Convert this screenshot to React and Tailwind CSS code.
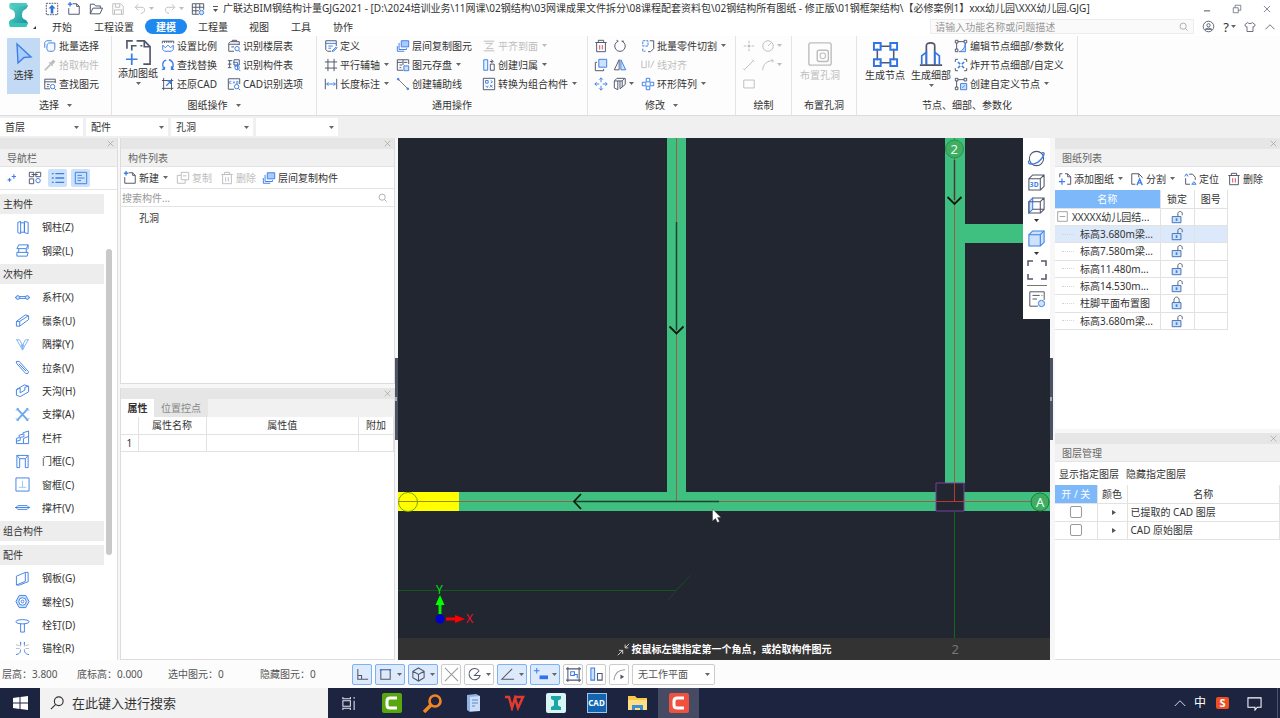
import React from "react";

const D = "#50566b";
const B = "#3d7fe6";
const L = "#cfe2fb";
const G = "#bdbdbd";

function Svg({ children, s = 14, vb = 16, stroke = D, sw = 1.1 }) {
  return (
    <svg width={s} height={s} viewBox={`0 0 ${vb} ${vb}`} fill="none" stroke={stroke} strokeWidth={sw} className="shrink-0" aria-hidden="true">
      {children}
    </svg>
  );
}

function Caret({ color = "#666" }) {
  return (
    <svg width="5" height="3" viewBox="0 0 5 3" className="shrink-0" aria-hidden="true">
      <path d="M0 0h5L2.5 3z" fill={color} />
    </svg>
  );
}

const ic = {
  batch: <><path d="M2 10V4l2-2h6" stroke={B} /><path d="M4.500 8c0-2 1-3.500 3-3.500h6v6c0 2-1 3.500-3 3.500h-3c-2 0-3-1-3-3z" stroke={B} fill="#f4f8ff" /></>,
  pick: <><path d="M2 14l6.500-6.500" stroke={G} strokeWidth="2" /><path d="M7 5l4 4" stroke={G} strokeWidth="1.500" /><path d="M9 7l4-4" stroke={G} strokeWidth="3.500" /></>,
  find: <><path d="M14 7V2.500H2v11h6" /><path d="M2 5.500h12M4.500 8.500h3M4.500 11h2" /><circle cx="11" cy="11" r="2.500" stroke={B} /><path d="M13 13l2 2" stroke={B} /></>,
  scale: <><path d="M1.500 5V2.500h13V5M4 2.500v2M6.500 2.500v2M9 2.500v2M11.500 2.500v2" /><path d="M2 7v5l2 2h8l2-2V7l-3 3-3-3-3 3z" stroke={B} /></>,
  replace: <><path d="M6 2.500C1 3.500 1 10 4 13M4 13H1M4 13v-3" stroke={B} strokeWidth="1.500" /><path d="M9 2c5 1 6.500 7 3 11M12 9.500V13h3" stroke={B} strokeWidth="1.500" /></>,
  restore: <><path d="M3 1v14M1 4h13M1 13h13M12 2v13" /><path d="M6 10l5-5M7.500 4.500H11V8" stroke={B} strokeWidth="1.600" /></>,
  floorTbl: <><path d="M14 7V3H4L2 5v9h6M2 6h12M5 9h3M6 3V1.500h5V3" /><circle cx="11.500" cy="11" r="2.500" stroke={B} /><path d="M13.500 13l1.500 2" stroke={B} /></>,
  compTbl: <><path d="M1 3h5M1 7h4M1 11h4M3 3v8M8 2h6v6H8z" /><path d="M7 5h5v8M8 9h4" stroke={B} /><circle cx="11.500" cy="11" r="2.500" stroke={B} /><path d="M13.500 13l1.500 2" stroke={B} /></>,
  cadOpt: <><path d="M14.500 8V2h-13v12H8" /><path d="M5 5H3v2.500h2M7 7.500L8 5l1 2.500M11 5v2.500h1.500V5z" stroke={B} strokeWidth=".8" /><circle cx="11" cy="11" r="2.500" stroke={B} /><path d="M13 13l2 2" stroke={B} /></>,
  define: <><path d="M14 8V2H2v10l2 2h4" /><path d="M2 5h12M5 8h5M5 10.500h3" stroke={B} /><path d="M9 14l5-5 1 1-4 4z" stroke={B} fill={L} /></>,
  axis: <path d="M4.500 1v14M11.500 1v14M1 4.500h14M1 11.500h14" />,
  length: <><path d="M1.500 2v12M14.500 2v12" /><path d="M3 8h10M5 6L3 8l2 2M11 6l2 2-2 2" stroke={B} /></>,
  layerCopy: <><path d="M6 2h8.500v7H6z" fill="#a9ccff" stroke={B} /><path d="M3.500 4.500V12H12v-1.500M1.500 8v6h8" stroke={B} /></>,
  save: <><path d="M14.500 7V2h-13v12H8M1.500 5h6M8 2v6M4 8h3M4 11h2" /><path d="M9 9h5.500v5.500H9z" stroke={B} fill={L} /><path d="M9 5h4" /></>,
  auxline: <><path d="M3 3l10 10" stroke="#777" /><circle cx="2.500" cy="2.500" r="1" fill={B} stroke={B} /><circle cx="13.500" cy="13.500" r="1" fill={B} stroke={B} /></>,
  flat: <path d="M2 2.500h12M2 13.500h12M4 5h8L5 11h8" stroke={G} />,
  belong: <><path d="M2 2h4.500v12H2z" stroke={B} fill="#e8f1ff" /><path d="M9.500 7h4.500v7H9.500zM9 4h3M10.500 2L13 4l-2.500 1.500" /></>,
  convert: <><path d="M1.500 1.500h13v13h-13z" /><path d="M4 4h3v3H4zM9 9l3 3M12 9l-3 3M10 4l2 1.500L10 7M4 10l2 2 1-2" stroke={B} /></>,
  trash: <><path d="M1.500 4h13M5 4V1.500h6V4M3 4v10.500h10V4" /><path d="M6.500 7v5M9.500 7v5" stroke="#e0435c" /></>,
  rotate: <path d="M10 2.500A6 6 0 1 1 6 2.500M6 2.500L4 1.500M10 2.500h2.500" />,
  copy: <><path d="M5.500 1.500h9v9h-9z" fill={L} stroke={B} /><path d="M3.500 5h-2v9.500H11v-2" /></>,
  mirror: <><path d="M7 2v11.500H1.500z" /><path d="M9 2v11.500h5.500z" stroke={B} fill={L} /></>,
  move: <path d="M8 1v5M8 10v5M1 8h5M10 8h5M6 3L8 1l2 2M6 13l2 2 2-2M3 6L1 8l2 2M13 6l2 2-2 2" stroke={B} />,
  stretch: <path d="M1.500 4.500l3-3h9l-3 3zM1.500 4.500v8l4 2V4.500M8 4.500v9l6-5v-7M10.500 4.500v7" />,
  cut: <><path d="M2 2h6v6H2zM2 11v3h3" stroke={B} strokeDasharray="3 1" /><path d="M10 2h4.500v9L11 14.500H8" /></>,
  align: <path d="M1 3v8h5V3M9 3v8M11 11l4-8" stroke={G} />,
  ring: <path d="M6 1.500h4v4H6zM6 10.500h4v4H6zM1.500 6h4v4h-4zM10.500 6h4v4h-4z" stroke={B} />,
  crossDot: <><path d="M8 2v12M2 8h12" stroke={G} strokeDasharray="3 1.500" /><circle cx="8" cy="8" r="1.500" fill={G} stroke="none" /></>,
  circ: <><circle cx="8" cy="8" r="6" stroke={G} /><path d="M8 8l4-4" stroke={G} /></>,
  line: <path d="M2.500 13.500l11-11M1.500 12l2 2M12 2l2 2" stroke={G} />,
  arc: <path d="M2 14C2 7 7 3 14 3M12 1.500l2 1.500-1 2" stroke={G} />,
  rect: <path d="M2 3.500h12v9H2z" stroke={G} />,
  nodeEdit: <><path d="M1.500 1.500h3v3h-3zM11.500 1.500h3v3h-3zM1.500 11.500h3v3h-3zM4.500 3h7M3 4.500v7" /><path d="M13 4.500v10H6c4-1 6-4 7-10z" stroke={B} fill={L} /></>,
  nodeBoom: <><path d="M4.500 1.500h-3v3M11.500 1.500h3v3M4.500 14.500h-3v-3M11.500 14.500h3v-3" /><path d="M4.500 4.500L7 7M11.500 4.500L9 7M4.500 11.500L7 9M11.500 11.500L9 9" stroke={B} strokeWidth="1.800" /></>,
  nodeNew: <><path d="M1.500 1.500h3v3h-3zM11.500 1.500h3v3h-3zM1.500 11.500h3v3h-3zM4.500 3h7M3 4.500v7" /><path d="M7.500 7.500h7v7h-7zM9.500 12.500l3-3" stroke={B} fill={L} /></>,
  sheetAdd: <><path d="M2 6V2h3M8 2h3l3.500 3.500V14h-4M11 2v3.500h3.500" /><path d="M1 11h7M4.500 7.500v7" stroke={B} strokeWidth="1.400" /></>,
  sheetSplit: <><path d="M6 14H2V2h8l4 4v1M10 2v4" /><path d="M8 15l3-7 3 7M9 12.500h4" stroke={B} strokeWidth="1.500" /></>,
  sheetPos: <><path d="M3 7v7h5M7 2.500h4l3 3.500v3" /><path d="M2 5l2-3 2 3M10 14l2.500-3 2.500 3z" stroke={B} fill={L} /></>,
  newDoc: <><path d="M6.500 2H11l3 3v9H2V7M11 2v3h3" /><path d="M3.500 0v5M1 2.500h5" stroke={B} strokeWidth="1.600" /></>,
  copyG: <path d="M6 1.500h8.500V10H6zM6 5H1.500v9h9v-4M8 5.500h4" stroke={G} />,
  trashG: <path d="M1.500 4h13M5 4V1.500h6V4M3 4v10.500h10V4M6.500 7v5M9.500 7v5" stroke={G} />,
  search: <><circle cx="7.500" cy="7.500" r="4.500" /><path d="M11 11l3 3" /></>,
};

function Cmd({ icon, label, arrow, off }) {
  return (
    <button type="button" aria-label={label || icon} className={"flex h-[19px] items-center gap-0.5 whitespace-nowrap " + (off ? "text-[#bdbdbd]" : "text-[#333]")}>
      <Svg>{ic[icon]}</Svg>
      {label && <span>{label}</span>}
      {arrow && <span className={label ? "ml-0.5" : ""}><Caret color={off ? G : "#666"} /></span>}
    </button>
  );
}

function Col({ w, items }) {
  return (
    <div className={"flex shrink-0 flex-col " + w}>
      {items.map((i, n) => <Cmd key={n} {...i} />)}
    </div>
  );
}

function Group({ label, arrow, w, children }) {
  return (
    <section className={"flex shrink-0 flex-col border-r border-[#e4e4e4] " + w}>
      <div className="flex h-[59px]">{children}</div>
      <div className="flex h-5 items-center justify-center gap-2">{label}{arrow && <Caret />}</div>
    </section>
  );
}

function Big({ label, children, active, off, arrow, w }) {
  return (
    <button type="button" className={"flex h-[56px] shrink-0 flex-col items-center pt-0.5 whitespace-nowrap " + w + (active ? " bg-[#c3daf5]" : "") + (off ? " text-[#bdbdbd]" : "")}>
      <span className="flex h-7 items-center">{children}</span>
      <span className="leading-[14px]">{label}</span>
      {arrow && <span className="mt-0.5"><Caret /></span>}
    </button>
  );
}

function Header() {
  return (
    <header className="flex bg-white">
      <div className="flex h-9 w-10 shrink-0 items-start gap-1 pl-2 pt-0.5">
        <svg width="21" height="26" viewBox="0 0 21 26" aria-label="logo">
          <defs>
            <linearGradient id="lg" x1="0" y1="0" x2="1" y2="1"><stop offset="0" stopColor="#5fdccb" /><stop offset="1" stopColor="#128a9a" /></linearGradient>
          </defs>
          <path d="M2 1h16l2 3-2 3c-3 1-4 3-4 6s1 4 4 5l2 3-2 4H2l-1-4 1-3c4-1 5-2 5-5s-1-5-5-6L1 4z" fill="url(#lg)" />
          <path d="M2 1h16l2 3H4z" fill="#49c9bd" /><path d="M1 19l5 2h14l-2 4H2z" fill="#35c5b4" />
        </svg>
        <span className="mt-6"><svg width="3" height="3"><path d="M3 0v3H0z" fill="#333" /></svg></span>
      </div>
      <div className="flex min-w-0 flex-1 flex-col">
        <div className="flex h-[17px] items-center">
          <div className="flex w-[183px] shrink-0 items-center pl-[5px]">
            <button type="button" aria-label="上传" className="w-[22px]"><Svg><path d="M1.500 1.500h13v13h-13z" strokeDasharray="2 1" /><path d="M8 3l4 4.500H9.500V13h-3V7.500H4z" fill="#2f6fe0" stroke="none" /></Svg></button>
            <button type="button" aria-label="新建工程" className="w-[22px]"><Svg>{ic.newDoc}</Svg></button>
            <button type="button" aria-label="打开" className="w-[22px]"><Svg><path d="M1.500 13.500V2.500H6l1.500 2H13V7M1.500 13.500L4.500 7H15.500l-3 6.500z" /></Svg></button>
            <button type="button" aria-label="保存" className="w-[22px]"><Svg><path d="M2 2h9l3 3v9H2zM5 2v4h5V2M4 14V9h8v5" stroke={G} /></Svg></button>
            <button type="button" aria-label="撤销" className="flex w-[30px] items-center gap-0.5"><Svg><path d="M3 6h7c5 0 4 7-1 7M6 2.500L2.500 6 6 9.500" stroke={G} /></Svg><Caret color={G} /></button>
            <button type="button" aria-label="重做" className="flex w-7 items-center gap-0.5"><Svg><path d="M13 6H6c-5 0-4 7 1 7M10 2.500L13.500 6 10 9.500" stroke={G} /></Svg><Caret color={G} /></button>
            <button type="button" aria-label="表格" className="flex items-center gap-2"><Svg><path d="M9 14H1.500V2h13v7M1.500 6h13M1.500 10H9M5.500 2v12M10 2v7" /><circle cx="12" cy="12" r="2.500" stroke={B} fill={L} /></Svg><svg width="5" height="6" viewBox="0 0 5 6"><path d="M0 0h5v1H0zM0 3h5L2.500 6z" fill="#555" /></svg></button>
          </div>
          <h1 className="min-w-0 flex-1 truncate leading-[17px] text-[#333]">广联达BIM钢结构计量GJG2021 - [D:\2024培训业务\11网课\02钢结构\03网课成果文件拆分\08课程配套资料包\02钢结构所有图纸 - 修正版\01钢框架结构\【必修案例1】xxx幼儿园\XXX幼儿园.GJG]</h1>
          <div className="flex shrink-0 items-center gap-5 pr-2">
            <button type="button" aria-label="最小化"><Svg s={10} sw={1.6}><path d="M3 11h10" /></Svg></button>
            <button type="button" aria-label="还原"><Svg s={10}><path d="M2 6h8v8H2zM5 6V2h9v8h-4" /></Svg></button>
            <button type="button" aria-label="关闭"><Svg s={10}><path d="M3 3l10 10M13 3L3 13" /></Svg></button>
          </div>
        </div>
        <nav className="flex h-[19px] items-center">
          <a href="#start" className="w-[42px] pl-3">开始</a>
          <a href="#setup" className="w-[63px] pl-3">工程设置</a>
          <a href="#model" className="flex h-[15px] w-[42px] items-center justify-center rounded-full bg-[#1e87f0] font-bold text-white">建模</a>
          <a href="#qty" className="w-[62px] pl-[11px]">工程量</a>
          <a href="#view" className="w-[42px]">视图</a>
          <a href="#tool" className="w-[42px]">工具</a>
          <a href="#team">协作</a>
          <div className="ml-auto flex items-center gap-2 pr-1">
            <label className="flex h-[15px] w-[264px] items-center border border-[#ececec] bg-[#fafafa] px-1 text-[#999]">
              <input aria-label="功能搜索" placeholder="请输入功能名称或问题描述" className="min-w-0 flex-1 bg-transparent outline-none placeholder:text-[#999]" />
              <Svg s={11} stroke="#999">{ic.search}</Svg>
            </label>
            <button type="button" aria-label="用户"><Svg s={13}><circle cx="8" cy="8" r="6.500" /><circle cx="8" cy="6.500" r="2" /><path d="M4 11.500c2-2 6-2 8 0z" /></Svg></button>
            <button type="button" aria-label="帮助" className="flex items-center gap-0.5 text-[13px] leading-3">?<Caret /></button>
            <button type="button" aria-label="皮肤"><Svg s={12}><path d="M5 2L1 5l2 3 1-.5V14h8V7.500l1 .5 2-3-4-3c-1 2-5 2-6 0z" /></Svg></button>
            <button type="button" aria-label="收起"><Svg s={12}><path d="M2 11l6-6 6 6" /></Svg></button>
          </div>
        </nav>
      </div>
    </header>
  );
}

function Ribbon() {
  return (
    <div className="flex h-[79px] shrink-0 overflow-hidden bg-[#fdfdfd]">
      <Group w="w-[112px]" label="选择" arrow>
        <Big w="ml-[7px] mt-0.5 w-[33px]" label="选择" active><svg width="20" height="24" viewBox="0 0 20 24"><path d="M3 2l14 13-7 .5L4 21z" fill="#a8cdfb" stroke={B} strokeWidth="1.400" /></svg></Big>
        <Col w="pl-[3px]" items={[{ icon: "batch", label: "批量选择" }, { icon: "pick", label: "拾取构件", off: true }, { icon: "find", label: "查找图元" }]} />
      </Group>
      <Group w="w-[205px]" label="图纸操作" arrow>
        <Big w="ml-[5px] mr-0.5 w-[42px]" label="添加图纸" arrow><Svg s={27} vb={28}><path d="M2 10V2h6M12 2h8l6 6v12M26 20v6h-7M20 2v6h6M7 12V7h5M16 7h2" strokeWidth="1.700" /><path d="M1 21h12M7 15v12" stroke={B} strokeWidth="1.800" /></Svg></Big>
        <Col w="w-[66px]" items={[{ icon: "scale", label: "设置比例" }, { icon: "replace", label: "查找替换" }, { icon: "restore", label: "还原CAD" }]} />
        <Col w="" items={[{ icon: "floorTbl", label: "识别楼层表" }, { icon: "compTbl", label: "识别构件表" }, { icon: "cadOpt", label: "CAD识别选项" }]} />
      </Group>
      <Group w="w-[271px]" label="通用操作">
        <Col w="ml-[7px] w-[72px]" items={[{ icon: "define", label: "定义" }, { icon: "axis", label: "平行辅轴", arrow: true }, { icon: "length", label: "长度标注", arrow: true }]} />
        <Col w="w-[86px]" items={[{ icon: "layerCopy", label: "层间复制图元" }, { icon: "save", label: "图元存盘", arrow: true }, { icon: "auxline", label: "创建辅助线" }]} />
        <Col w="" items={[{ icon: "flat", label: "平齐到面", arrow: true, off: true }, { icon: "belong", label: "创建归属", arrow: true }, { icon: "convert", label: "转换为组合构件", arrow: true }]} />
      </Group>
      <Group w="w-[148px]" label="修改" arrow>
        <Col w="ml-1.5 w-[19px]" items={[{ icon: "trash" }, { icon: "copy" }, { icon: "move" }]} />
        <Col w="w-7" items={[{ icon: "rotate" }, { icon: "mirror" }, { icon: "stretch", arrow: true }]} />
        <Col w="" items={[{ icon: "cut", label: "批量零件切割", arrow: true }, { icon: "align", label: "线对齐", off: true }, { icon: "ring", label: "环形阵列", arrow: true }]} />
      </Group>
      <Group w="w-14" label="绘制">
        <Col w="ml-1.5 w-[19px]" items={[{ icon: "crossDot", off: true }, { icon: "line", off: true }, { icon: "rect", off: true }]} />
        <Col w="" items={[{ icon: "circ", arrow: true, off: true }, { icon: "arc", arrow: true, off: true }]} />
      </Group>
      <Group w="w-[65px]" label="布置孔洞">
        <Big w="ml-[5px] mt-0.5 w-[46px]" label="布置孔洞" off><Svg s={26} vb={28} stroke={G}><rect x="2" y="2" width="24" height="24" rx="2" strokeWidth="1.500" /><rect x="11" y="10" width="12" height="12" rx="2" strokeWidth="1.500" /><circle cx="17" cy="16" r="3" /></Svg></Big>
      </Group>
      <Group w="w-[221px]" label="节点、细部、参数化">
        <Big w="ml-[5px] mt-0.5 w-[46px]" label="生成节点"><Svg s={27} vb={28}><path d="M8 5.500h12M8 22.500h12M5.500 8v12M22.500 8v12" strokeWidth="1.600" /><path d="M2 2h7v7H2zM19 2h7v7h-7zM2 19h7v7H2zM19 19h7v7h-7z" stroke="#2f74e8" strokeWidth="2" /></Svg></Big>
        <Big w="mt-0.5 w-[46px]" label="生成细部" arrow><Svg s={26} vb={28}><path d="M9 25V5c0-4 9-4 9 0v20M2 26h24" strokeWidth="1.800" /><path d="M4 25V16l5-4v13M23 25V16l-5-4v13" stroke="#2f74e8" strokeWidth="1.800" /></Svg></Big>
        <Col w="" items={[{ icon: "nodeEdit", label: "编辑节点细部/参数化" }, { icon: "nodeBoom", label: "炸开节点细部/自定义" }, { icon: "nodeNew", label: "创建自定义节点", arrow: true }]} />
      </Group>
    </div>
  );
}

function Sel({ label, value, w }) {
  return (
    <div className={"relative flex items-center bg-white " + w}>
      <select aria-label={label} className="h-full w-full appearance-none bg-transparent pl-[5px] outline-none"><option>{value}</option></select>
      <span className="pointer-events-none absolute right-1"><Caret /></span>
    </div>
  );
}

function PanelTop({ title }) {
  return (
    <>
      <div className="flex h-[11px] shrink-0 items-center justify-end bg-[#e6e6e6] pr-0.5">
        <button type="button" aria-label={"关闭" + (title || "属性")}><Svg s={9} stroke="#999"><path d="M3 3l10 10M13 3L3 13" /></Svg></button>
      </div>
      {title && <h2 className="flex h-[18px] shrink-0 items-center border-b border-[#e4e4e4] bg-[#f1f1f1] pl-[7px] text-[#666]">{title}</h2>}
    </>
  );
}

const nav = [
  ["主构件"],
  ["钢柱(Z)", <path d="M3 2.500l3-1v13l-3-1zM6 3h4v10H6M10 1.500l4 1v12l-4-1z" />],
  ["钢梁(L)", <path d="M4 2h10l-2 4H2zM4 6v4M14 2v4l-1 1M2 10h12l-1 4H2zM12 6v4" />],
  ["次构件"],
  ["系杆(X)", <><circle cx="3" cy="8" r="2" fill={L} /><circle cx="13" cy="8" r="2" fill={L} /><path d="M0 8h1M5 7h6M5 9h6M15 8h1" /></>],
  ["檩条(U)", <path d="M1.500 9L11 2l3.500 1v4L5 14H1.500zM1.500 9H5v5M5 9l9-6" />],
  ["隅撑(Y)", <><path d="M2 3l6 11 6-11M5 3l3 6 3-6M1 3h4M11 3h4" stroke="#7db3f5" /><path d="M6 8h4l-2 6z" fill="#7db3f5" stroke="none" /></>],
  ["拉条(V)", <path d="M1.500 1.500h3l10 11-1 2h-2l-10-11zM4 4l8 8" />],
  ["天沟(H)", <path d="M1.500 7v6l4 1.500 9-5v-6l-4 1v3l-5 3V5.500zM1.500 7L10 2l4.500 1.500" />],
  ["支撑(A)", <><path d="M2 1.500l12 13M14 1.500l-12 13" stroke="#6ea8ef" strokeWidth="2" /><path d="M1 4l3-3M12 1l3 3M1 12l3 3M12 15l3-3" stroke="#6ea8ef" /></>],
  ["栏杆", <path d="M1.500 14.500V9l3-1V5.500l4-1V3l6-2v13.500zM1.500 12l4-1V8l4-1V4M9 14V9l5-2" />],
  ["门框(C)", <path d="M2 14.500V1.500h12v13h-3V5H5v9.500zM2 1.500L5 5M14 1.500L11 5" />],
  ["窗框(C)", <><path d="M1 1h14v14H1z" /><path d="M8 4v7M4 11h8" stroke="#9cc4f5" /></>],
  ["撑杆(V)", <path d="M0 8h16M3 6h10l2 2-2 2H3L1 8z" />],
  ["组合构件"],
  ["配件"],
  ["钢板(G)", <path d="M1.500 5.500L11 1.500v9.500l-9.500 4zM11 1.500h3v10l-3 1-6 2.500H2" />],
  ["螺栓(S)", <><path d="M4.500 1.500h7L15 8l-3.500 6.500h-7L1 8z" fill={L} /><circle cx="8" cy="8" r="4" fill="#fff" /><circle cx="8" cy="8" r="1.500" /></>],
  ["栓钉(D)", <path d="M1 4c0-3 14-3 14 0s-14 3-14 0zM6 6v9h4V6" />],
  ["锚栓(R)", <><path d="M6 1v5M10 1v5M1 4l4 1M15 4l-4 1M1 8h4M11 8h4" stroke={G} /><path d="M6 9c0 4-2 5-5 5.500M10 9c0 4 2 5 5 5.500M6 1v3M10 1v3" /></>],
];

function NavPanel() {
  const active = "flex h-[18px] w-[19px] items-center justify-center rounded-xs bg-[#cce1fa]";
  const plain = "flex h-[18px] w-[19px] items-center justify-center";
  return (
    <aside className="flex w-[118px] shrink-0 flex-col border-r border-[#ddd] bg-white">
      <PanelTop title="导航栏" />
      <div className="flex h-[23px] shrink-0 items-center gap-1 border-b border-[#e4e4e4] pl-0.5">
        <button type="button" aria-label="添加" className={plain}><Svg s={10} stroke={B} sw={1.8}><path d="M11 2v7M7.500 5.500h7M4 8v6M1 11h6" /></Svg></button>
        <button type="button" aria-label="网格" className={plain}><Svg><path d="M1.500 1.500h5v5h-5zM9 1.500h5.500v5H9zM1.500 9h5v5.500h-5zM4 4h7" /><circle cx="11.500" cy="11" r="2.500" stroke={B} /></Svg></button>
        <button type="button" aria-label="列表" className={active}><Svg stroke={B} sw={1.5}><path d="M1 3h2M5 3h10M1 8h2M5 8h10M1 13h2M5 13h10" /></Svg></button>
        <button type="button" aria-label="详情" className={active}><Svg stroke={B}><path d="M1.500 1.500h13v13h-13zM4 5h5M4 8h8M4 11h4" /></Svg></button>
      </div>
      <div className="flex min-h-0 flex-1 pt-0.5">
        <ul className="flex w-[104px] flex-col">
          {nav.map(([t, d], i) => (
            <li key={i} className="flex min-h-0 flex-1 items-center">
              {d ? (
                <button type="button" className="flex items-center gap-3 pl-[15px] text-left"><Svg s={15} stroke={B} sw={1}>{d}</Svg>{t}</button>
              ) : (
                <h3 className="flex h-5 w-full items-center bg-[#ededed] pl-[3px]">{t}</h3>
              )}
            </li>
          ))}
        </ul>
        <div className="ml-0.5 w-1.5 pt-[57px]"><div className="h-[306px] w-full rounded-full bg-[#c9c9c9]" /></div>
      </div>
    </aside>
  );
}

function MidPanels() {
  const c = "border-r border-b border-[#e2e2e2] font-normal";
  return (
    <div className="flex w-[275px] shrink-0 flex-col gap-1">
      <section className="flex flex-[246] flex-col border border-t-0 border-[#ddd] bg-white">
        <PanelTop title="构件列表" />
        <div className="flex h-[22px] shrink-0 items-center border-b border-[#e4e4e4] pl-0.5">
          <div className="w-[53px]"><Cmd icon="newDoc" label="新建" arrow /></div>
          <div className="w-11"><Cmd icon="copyG" label="复制" off /></div>
          <div className="w-[42px]"><Cmd icon="trashG" label="删除" off /></div>
          <Cmd icon="layerCopy" label="层间复制构件" />
        </div>
        <label className="flex h-[18px] shrink-0 items-center border-b border-[#e4e4e4] pl-px pr-1.5">
          <input aria-label="搜索构件" placeholder="搜索构件..." className="min-w-0 flex-1 outline-none placeholder:text-[#999]" />
          <Svg s={11} stroke="#999">{ic.search}</Svg>
        </label>
        <p className="pl-[18px] pt-[3px] leading-4">孔洞</p>
      </section>
      <section className="flex flex-[272] flex-col border border-t-0 border-[#ddd] bg-white">
        <PanelTop />
        <div role="tablist" className="flex h-[18px] shrink-0 bg-[#f1f1f1]">
          <button type="button" role="tab" aria-selected="true" className="w-[33px] bg-white font-bold">属性</button>
          <button type="button" role="tab" aria-selected="false" className="w-[54px] bg-[#e6e6e6] text-[#888]">位置控点</button>
        </div>
        <table className="w-full table-fixed border-collapse text-center">
          <colgroup><col className="w-[17px]" /><col className="w-[68px]" /><col /><col className="w-[35px]" /></colgroup>
          <thead><tr className="h-[17px]"><th className={c} /><th className={c}>属性名称</th><th className={c}>属性值</th><th className={c}>附加</th></tr></thead>
          <tbody><tr className="h-[17px]"><td className={c}>1</td><td className={c} /><td className={c} /><td className={c} /></tr></tbody>
        </table>
      </section>
    </div>
  );
}

function Canvas() {
  return (
    <main className="relative min-w-0 flex-1 overflow-hidden bg-[#212631]">
      <svg className="absolute inset-0 h-full w-full" viewBox="398 138 652 522" preserveAspectRatio="xMidYMid slice" fill="none" fontFamily="Noto Sans, sans-serif" aria-label="模型视图">
        <path d="M667 138h19v354h-19zM945 138h20v345h-20zM965 224h85v19h-85zM459 492h591v19H459z" fill="#3fc081" />
        <path d="M398 492h61v19h-61z" fill="#ffff00" />
        <path d="M936 483h28v28h-28z" fill="#212631" stroke="#7b3fa0" />
        <path d="M459 501.500h477M964 501.500h86M954.500 138v345M676.500 138v363" stroke="#94604a" />
        <path d="M398 501.500h61" stroke="#a58a00" />
        <path d="M936 501.500h28M954.500 483v19" stroke="#b8382c" />
        <path d="M676.500 222v108M575 501.500h144" stroke="#24402a" strokeWidth="1.500" />
        <path d="M669.500 326.500l7 7 7-7M581 494l-7 7.500 7 7.500M947.500 197l7 7 7-7" stroke="#0c1a10" strokeWidth="1.800" />
        <path d="M954.500 160v40" stroke="#4a3c2c" strokeWidth="1.500" />
        <path d="M954.500 511v128" stroke="#0e6b1c" />
        <path d="M398 590.500h278l8-8" stroke="#0e5a1c" /><path d="M684 582l7-7M668 600l8-9" stroke="#1d4229" />
        <circle cx="954.500" cy="149" r="9" fill="#3fae62" stroke="#239447" />
        <text x="950.500" y="154" fill="#e8fff0" fontSize="13">2</text>
        <circle cx="1040" cy="502" r="9" fill="#3fae62" stroke="#1a7f38" />
        <text x="1036" y="507" fill="#f0fff5" fontSize="13">A</text>
        <circle cx="408" cy="502" r="9.500" stroke="#77a500" />
        <path d="M440 614v-12" stroke="#00f000" strokeWidth="3" /><path d="M435.500 605l4.500-10 4.500 10z" fill="#00ff00" />
        <path d="M446 619h10" stroke="#f00" strokeWidth="3" /><path d="M455 615l10 4-10 4z" fill="#ff0000" />
        <circle cx="440" cy="619" r="4.500" fill="#0000c8" />
        <text x="436" y="594" fill="#00e000" fontSize="12">Y</text>
        <text x="466" y="623" fill="#f01020" fontSize="12">X</text>
        <path d="M712.500 509v12l3-2.500 2 4 2-1-2-4h3.500z" fill="#fff" stroke="#333" strokeWidth=".4" />
      </svg>
      <div className="absolute inset-x-0 bottom-0 flex h-[22px] items-center justify-center gap-0.5 bg-[#333333] font-bold text-white">
        <Svg s={13} stroke="#ddd"><path d="M15 1l-5 5M10 2v4h4M1 15l6-6M2.500 9H7v4.500" /></Svg>
        按鼠标左键指定第一个角点，或拾取构件图元
        <span className="absolute right-[91px] text-[13px] font-normal text-[#777]">2</span>
      </div>
      <div className="absolute right-0 top-0 flex h-[181px] w-[27px] flex-col items-center bg-white pt-2.5">
        <button type="button" aria-label="旋转视图" className="flex h-[21px] items-center"><Svg s={19} vb={20}><circle cx="10" cy="10" r="7.500" /><path d="M2.500 12c-4 5 6 5 11 0s6-9 2-8" stroke={B} strokeWidth="1.500" /></Svg></button>
        <button type="button" aria-label="三维视图" className="flex h-[27px] items-center"><Svg s={19} vb={20}><path d="M2 6h12v12H2zM2 6l4-4h12v12l-4 4M14 6l4-4" /><text x="3" y="15" fontSize="7" fontWeight="700" fill={B} stroke="none">3D</text></Svg></button>
        <button type="button" aria-label="线框" className="flex h-[33px] flex-col items-center gap-1"><Svg s={19} vb={20}><path d="M2 6l4-4v12l-4 4z" fill={L} stroke={B} /><path d="M2 6h12v12H2zM6 2h12v12H6M14 6l4-4M14 18l4-4" /></Svg><Caret color="#333" /></button>
        <button type="button" aria-label="实体" className="flex h-[31px] flex-col items-center gap-1"><Svg s={19} vb={20} stroke={B}><path d="M2 6l4-4h12v12l-4 4H2z" fill={L} /><path d="M2 6h12v12M14 6l4-4" /></Svg><Caret color="#333" /></button>
        <button type="button" aria-label="全图" className="flex h-[26px] items-start border-b border-[#777]"><Svg s={20} vb={20} sw={1.5}><path d="M6 1H1v5M14 1h5v5M6 19H1v-5M14 19h5v-5" /></Svg></button>
        <button type="button" aria-label="显示设置" className="mt-1"><Svg s={18} vb={20}><path d="M11 18H2V2h16v9M5 6h8M5 10h5M15 6h1" /><circle cx="15" cy="15" r="3.500" stroke={B} fill={L} /></Svg></button>
      </div>
    </main>
  );
}

function Lock({ open = true }) {
  return <Svg s={14} stroke="#4f6078"><path d="M2.500 7.500h10v7h-10z" fill={L} stroke="#3f70b8" /><path d={open ? "M9 7V4c0-3 5-3 5 0v2" : "M4.500 7V5c0-5 6-5 6 0v2"} /><path d="M7.500 9.500v3" stroke={B} strokeWidth="2" /></Svg>;
}

function Splitter({ w }) {
  return <div className={"flex shrink-0 items-center " + w}><div className="flex h-[82px] w-[3px] items-center bg-[#4b5263]"><span className="h-1 w-0.5 bg-[#aaa]" /></div></div>;
}

function RightPanels() {
  const c = "border-r border-b border-[#e2e2e2] p-0 font-normal";
  const rows = ["标高3.680m梁...", "标高7.580m梁...", "标高11.480m...", "标高14.530m...", "柱脚平面布置图", "标高3.680m梁..."];
  return (
    <div className="flex w-[225px] shrink-0 flex-col gap-1">
      <section className="flex flex-[292] flex-col bg-white">
        <PanelTop title="图纸列表" />
        <div className="flex h-[23px] shrink-0 items-center pl-[3px]">
          <div className="w-[72px]"><Cmd icon="sheetAdd" label="添加图纸" arrow /></div>
          <div className="w-[53px]"><Cmd icon="sheetSplit" label="分割" arrow /></div>
          <div className="w-11"><Cmd icon="sheetPos" label="定位" /></div>
          <Cmd icon="trash" label="删除" />
        </div>
        <table className="h-[140px] w-[173px] table-fixed border-collapse">
          <thead><tr className="h-[18px]"><th className={c + " w-[105px] bg-[#7db8fb] font-bold text-white"}>名称</th><th className={c + " w-[34px]"}>锁定</th><th className={c}>图号</th></tr></thead>
          <tbody>
            <tr className="h-[17px]"><td className={c}><span className="flex items-center gap-1 whitespace-nowrap pl-0.5"><Svg s={11} stroke="#888"><path d="M1 1h14v14H1zM4 8h8" /></Svg>XXXXX幼儿园结...</span></td><td className={c}><span className="flex justify-center"><Lock /></span></td><td className={c} /></tr>
            {rows.map((r, i) => (
              <tr key={i} className={"h-[17px] " + (i === 0 ? "bg-[#dbe9fb]" : "")}>
                <td className={c}><span className="flex items-center gap-1.5 whitespace-nowrap pl-[7px]"><span className="w-3 border-t border-dotted border-[#d5d5d5]" />{r}</span></td>
                <td className={c}><span className="flex justify-center"><Lock open={i !== 4} /></span></td>
                <td className={c} />
              </tr>
            ))}
          </tbody>
        </table>
      </section>
      <section className="flex flex-[226] flex-col border-b border-[#ddd] bg-white">
        <PanelTop title="图层管理" />
        <div className="flex h-[23px] shrink-0 items-center gap-[7px] pl-1">
          <button type="button">显示指定图层</button><button type="button">隐藏指定图层</button>
        </div>
        <table className="w-full table-fixed border-collapse">
          <thead><tr className="h-[18px]"><th className={c + " w-[42px] bg-[#7db8fb] font-bold text-white"}>开 / 关</th><th className={c + " w-[30px]"}>颜色</th><th className={c}>名称</th></tr></thead>
          <tbody>
            {["已提取的 CAD 图层", "CAD 原始图层"].map((t) => (
              <tr key={t} className="h-[18px]">
                <td className={c}><input type="checkbox" aria-label={t} className="mx-auto block size-3 appearance-none rounded-xs border border-[#999]" /></td>
                <td className={c}><span className="flex justify-center pl-1"><svg width="4" height="5"><path d="M0 0v5l4-2.500z" fill="#555" /></svg></span></td>
                <td className={c + " pl-[3px]"}>{t}</td>
              </tr>
            ))}
          </tbody>
        </table>
      </section>
    </div>
  );
}

const tools = [
  ["正交", 0, 1, <path d="M3 2v11h11M3 9h4v4" />],
  ["矩形", 1, 1, <><path d="M3 3h10v10H3z" /><path d="M2 2h2v2H2zM12 2h2v2h-2z" fill={B} stroke="none" /></>],
  ["立体", 1, 1, <path d="M8 1l6 3.500v7L8 15l-6-3.500v-7zM2 4.500L8 8l6-3.500M8 8v7" />],
  ["交叉", 0, 0, <path d="M1 1l14 14M15 1L1 15" stroke="#999" />],
  ["圆", 1, 0, <path d="M13 4a6 6 0 1 0 1 5H8l5-5" />],
  ["角度", 1, 1, <path d="M13 2L2 13h13" />],
  ["偏移", 1, 1, <><path d="M1 4h6M4 1v6" stroke={B} /><path d="M7 9h9v4H7z" fill="#2f74e8" stroke="none" /></>],
  ["框选", 0, 0, <><path d="M2 2h12v12H2zM0 2h2V0M14 0v2h2M0 14h2v2M16 14h-2v2" /><path d="M5 5h4v4H5zM8 8h4v4" stroke={B} /></>],
  ["对齐", 0, 0, <><path d="M2 1h4v13H2z" stroke={B} fill={L} /><path d="M9 7h5v7H9z" /></>],
  ["弧线", 0, 0, <><path d="M2 14C3 6 7 3 14 3" stroke="#999" /><path d="M9 8l4 2.500L9 13z" fill={D} stroke="none" /></>],
];

function Status() {
  return (
    <div className="flex h-7 shrink-0 items-center bg-[#fcfcfc] text-[#555]">
      <div className="flex w-[352px] shrink-0 pl-0.5">
        <span className="w-[75px]">层高：3.800</span><span className="w-[91px]">底标高：0.000</span><span className="w-[92px]">选中图元：0</span><span>隐藏图元：0</span>
      </div>
      <div className="flex gap-[3px]">
        {tools.map(([t, arrow, on, d]) => (
          <button key={t} type="button" aria-label={t} className={"flex h-[21px] items-center justify-center gap-1 rounded-xs border " + (arrow ? "w-[30px] " : "w-5 ") + (on ? "border-[#7eb0f2] bg-[#dceafc]" : "border-[#ccc] bg-white")}>
            <Svg s={15}>{d}</Svg>{arrow ? <Caret /> : null}
          </button>
        ))}
        <Sel label="工作平面" value="无工作平面" w="h-[21px] w-[83px] rounded-xs border border-[#ccc]" />
      </div>
    </div>
  );
}

function Taskbar() {
  const cell = "flex h-full w-[41px] items-center justify-center";
  return (
    <footer className="flex h-[30px] shrink-0 items-center bg-[#1c2440] text-white">
      <button type="button" aria-label="开始菜单" className="flex w-10 justify-center"><svg width="15" height="14" viewBox="0 0 15 14" fill="#fff"><path d="M0 2l6.500-1v5.500H0zM7.500 1L15 0v6.500H7.500zM0 7.500h6.500V13L0 12zM7.500 7.500H15V14l-7.500-1z" /></svg></button>
      <label className="flex h-full w-[288px] items-center gap-2 bg-[#f2f2f2] pl-2.5 text-[#333]">
        <svg width="14" height="16" viewBox="0 0 16 16" fill="none" stroke="#333" strokeWidth="1.300"><circle cx="10" cy="6" r="5" /><path d="M6.500 9.500L1 15" /></svg>
        <input aria-label="搜索" placeholder="在此键入进行搜索" className="min-w-0 flex-1 bg-transparent text-[13px] outline-none placeholder:text-[#333]" />
      </label>
      <button type="button" aria-label="任务视图" className={cell}><Svg s={15} stroke="#e5e7ee"><path d="M2 1v2h8V1M2 15v-2h8v2M2 5h8v6H2zM14 1v2M14 5v10" /></Svg></button>
      <button type="button" aria-label="Camtasia" className={cell + " ml-0.5"}><svg width="20" height="20" viewBox="0 0 20 20"><rect width="20" height="20" rx="2" fill="#58a70f" /><path d="M15 5H8C6 5 5 6 5 8v4c0 2 1 3 3 3h7" fill="none" stroke="#fff" strokeWidth="3" /></svg></button>
      <button type="button" aria-label="搜索工具" className={cell}><svg width="19" height="19" viewBox="0 0 19 19" fill="none" stroke="#f5861f"><circle cx="12" cy="7" r="5.500" strokeWidth="2.600" /><path d="M8 11l-7 7" strokeWidth="3.500" /></svg></button>
      <button type="button" aria-label="记事本" className={cell}><svg width="15" height="20" viewBox="0 0 15 20"><path d="M1 2l9-1 4 2v15l-10 1-3-2z" fill="#8fb2e8" /><path d="M4 4l10-1v15H4z" fill="#cbdcf6" /><path d="M6 7h6M6 10h6M6 13h3" stroke="#5c86c8" /></svg></button>
      <button type="button" aria-label="WPS" className={cell}><svg width="20" height="16" viewBox="0 0 20 16" fill="none" stroke="#e23b2e" strokeWidth="2.500"><path d="M0 2h4l3 11 3-10 3 10 5-11h-8" /></svg></button>
      <button type="button" aria-label="钢结构" className={cell}><svg width="20" height="20" viewBox="0 0 20 20"><rect width="20" height="20" rx="2" fill="#d9f5f3" /><path d="M5 3h10v3l-3 1.500v5L15 14v3H5v-3l3-1.500v-5L5 6z" fill="#1ba7a8" /></svg></button>
      <button type="button" aria-label="CAD" className={cell}><span className="flex size-5 items-center justify-center border border-[#9cc4ee] bg-[#1465b0] text-[8px] font-bold">CAD</span></button>
      <button type="button" aria-label="文件夹" className={cell}><svg width="19" height="16" viewBox="0 0 19 16"><path d="M0 1h7l2 2h10v12H0z" fill="#f7c84b" /><path d="M0 5h19v10H0z" fill="#ffdf83" /><path d="M4 15v-5h11v5h-3v-2H7v2z" fill="#3b8fd8" /></svg></button>
      <button type="button" aria-label="录屏" className={cell + " bg-[#454b62]"}><svg width="20" height="20" viewBox="0 0 20 20"><rect width="20" height="20" rx="2" fill="#f0503f" /><path d="M15 5H8C6 5 5 6 5 8v4c0 2 1 3 3 3h7" fill="none" stroke="#fff" strokeWidth="3" /></svg></button>
      <div className="ml-auto flex h-full items-center">
        <button type="button" aria-label="更多" className="mr-2"><Svg s={12} stroke="#fff"><path d="M1 12l7-7 7 7" /></Svg></button>
        <span className="mr-2.5 text-xs">中</span>
        <span className="mr-[18px] flex h-3 w-[13px] items-center justify-center rounded-xs bg-[#f04e23] text-[11px] font-bold leading-3">S</span>
        <button type="button" aria-label="通知" className="mr-[15px]"><Svg s={15} stroke="#fff"><path d="M1 2h14v10h-4l-2.500 3v-3H1z" /></Svg></button>
        <span className="mr-0.5 h-full border-l border-[#4a5270]" />
      </div>
    </footer>
  );
}

export default function App() {
  return (
    <div className="flex h-screen flex-col overflow-hidden bg-[#f0f0f0] text-[10px] leading-[14px] text-[#333] [font-family:'Noto_Sans','Noto_Sans_CJK_SC',sans-serif]" lang="zh-CN">
      <Header />
      <Ribbon />
      <div className="flex h-[23px] shrink-0 items-end gap-[3px] border-t border-[#dcdcdc] pb-0.5">
        <Sel label="楼层" value="首层" w="h-[18px] w-[83px]" />
        <Sel label="类别" value="配件" w="h-[18px] w-[82px]" />
        <Sel label="构件" value="孔洞" w="h-[18px] w-[82px]" />
        <Sel label="名称" value="" w="h-[18px] w-[82px]" />
      </div>
      <div className="flex min-h-0 flex-1 bg-[#f7f7f7]">
        <NavPanel />
        <div className="w-0.5 shrink-0" />
        <MidPanels />
        <Splitter w="w-[3px]" />
        <Canvas />
        <Splitter w="w-[5px]" />
        <RightPanels />
      </div>
      <Status />
      <Taskbar />
    </div>
  );
}
